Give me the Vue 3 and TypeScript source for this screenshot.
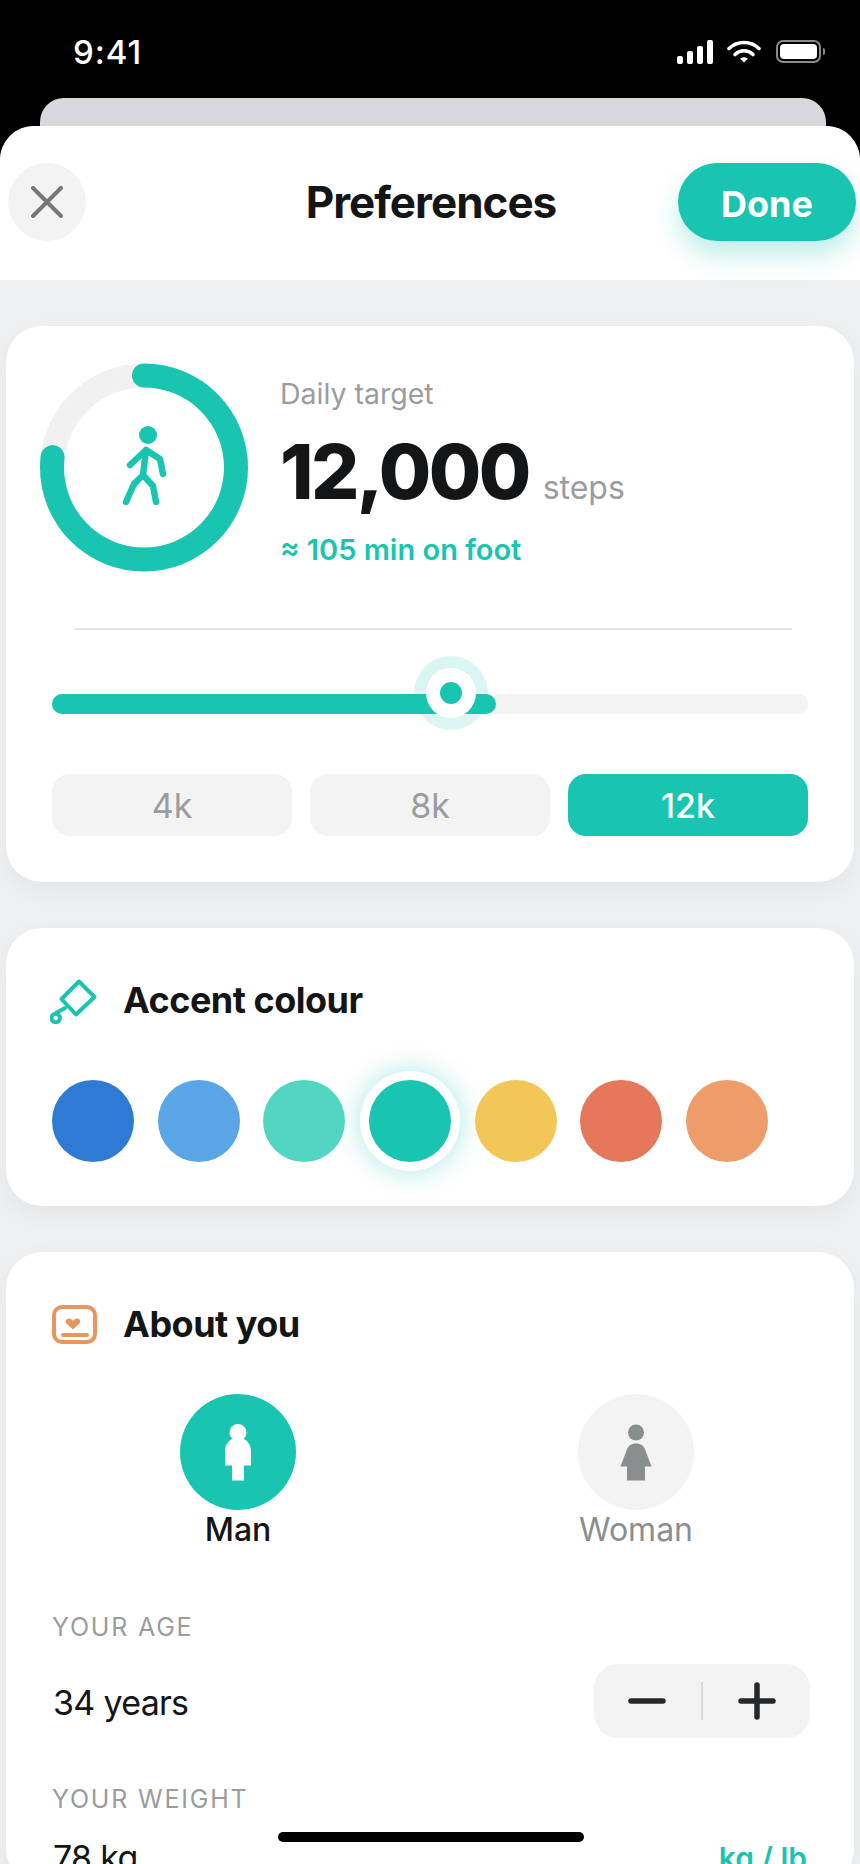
<template>
  <div class="phone">
    <div class="status">
      <span class="time">9:41</span>
      <div class="status-icons">
        <svg width="36" height="24" viewBox="0 0 36 24" fill="#fff">
          <rect x="0" y="16" width="6" height="8" rx="2" />
          <rect x="10" y="11" width="6" height="13" rx="2" />
          <rect x="20" y="6" width="6" height="18" rx="2" />
          <rect x="30" y="0" width="6" height="24" rx="2" />
        </svg>
        <svg width="34" height="24" viewBox="0 0 34 24" fill="none" stroke="#fff" stroke-width="3.6" stroke-linecap="round">
          <path d="M2 8.5C10.5 0.5 23.5 0.5 32 8.5" />
          <path d="M8 14.5C13.5 9.5 20.5 9.5 26 14.5" />
          <path d="M13.2 18.8 17 22.6 20.8 18.8C18.5 16.8 15.5 16.8 13.2 18.8Z" fill="#fff" stroke="none" />
        </svg>
        <div class="battery"><div class="battery-fill"></div></div>
      </div>
    </div>

    <div class="peek"></div>

    <div class="sheet">
      <header class="sheet-header">
        <button class="close">
          <svg width="32" height="32" viewBox="0 0 32 32" fill="none" stroke="#777" stroke-width="4" stroke-linecap="round">
            <path d="M2 2 30 30M30 2 2 30" />
          </svg>
        </button>
        <h1 class="title">Preferences</h1>
        <button class="done">Done</button>
      </header>

      <main class="content">
        <section class="card">
          <div class="hero">
            <div class="ring">
              <svg width="208" height="209" viewBox="0 0 208 209" fill="none">
                <circle cx="104" cy="104.500" :r="ringRadius" stroke="#f1f1f1" stroke-width="24" />
                <circle
                  cx="104"
                  cy="104.500"
                  :r="ringRadius"
                  stroke="#19c5b0"
                  stroke-width="24"
                  stroke-linecap="round"
                  :stroke-dasharray="ringDash"
                  transform="rotate(-90 104 104.500)"
                />
                <g stroke="#19c5b0" stroke-width="6.4" stroke-linecap="round" stroke-linejoin="round">
                  <circle cx="108" cy="72" r="9" fill="#19c5b0" stroke="none" />
                  <path d="M106 87 90 102M106 87 120 96 123 111M106 87 103 112 94 121 86 139M103 112 113 123 116 139" />
                </g>
              </svg>
            </div>
            <div class="hero-text">
              <div class="hero-label">Daily target</div>
              <div class="hero-value">12,000 <span class="hero-unit">steps</span></div>
              <div class="hero-note">≈ 105 min on foot</div>
            </div>
          </div>

          <div class="rule"></div>

          <div class="slider">
            <div class="track">
              <div class="track-fill"></div>
              <div class="thumb"><span class="thumb-dot"></span></div>
            </div>
          </div>

          <div class="presets">
            <button v-for="p in presets" :key="p" class="preset" :class="{ active: p === selectedPreset }">{{ p }}</button>
          </div>
        </section>

        <section class="card">
          <div class="card-title">
            <svg class="card-icon" width="48" height="48" viewBox="0 0 48 48" fill="none" stroke="#19c5b0" stroke-width="4" stroke-linejoin="round" stroke-linecap="round">
              <path d="M29 5.500 44.500 21 26 38.500 11.500 23Z" />
              <path d="M15 32 6 37" />
              <circle cx="5.700" cy="42" r="4.200" />
            </svg>
            <h2>Accent colour</h2>
          </div>
          <div class="swatches">
            <span
              v-for="c in swatches"
              :key="c"
              class="swatch"
              :class="{ selected: c === selectedSwatch }"
              :style="{ background: c }"
            ></span>
          </div>
        </section>

        <section class="card card-about">
          <div class="card-title">
            <svg class="card-icon" width="48" height="48" viewBox="0 0 48 48" fill="none" stroke="#e8965f" stroke-width="4" stroke-linecap="round">
              <rect x="4" y="7" width="41" height="35" rx="8" />
              <path d="M13 35H37" />
              <path d="M23 29.500 17 24C14.500 21.500 16 18.500 19 18.500 20.800 18.500 22 19.500 23 21 24 19.500 25.200 18.500 27 18.500 30 18.500 31.500 21.500 29 24Z" fill="#e8965f" stroke="none" />
            </svg>
            <h2>About you</h2>
          </div>

          <div class="gender">
            <div class="gender-option active">
              <div class="gender-circle">
                <svg width="30" height="57" viewBox="0 0 30 57" fill="#fff">
                  <circle cx="15" cy="8.500" r="8.500" />
                  <path d="M2 41.500V27C2 19 8 13.500 15 13.500S28 19 28 27V41.500H21V56.500H9V41.500Z" />
                </svg>
              </div>
              <span>Man</span>
            </div>
            <div class="gender-option">
              <div class="gender-circle">
                <svg width="34" height="57" viewBox="0 0 34 57" fill="#8a8e8f">
                  <circle cx="17" cy="8.500" r="8" />
                  <path d="M17 19.500C22 19.500 25 22 26.500 26.500L32.500 42.500H26V56.500H8V42.500H1.500L7.500 26.500C9 22 12 19.500 17 19.500Z" />
                </svg>
              </div>
              <span>Woman</span>
            </div>
          </div>

          <div class="field-label age-label">YOUR AGE</div>
          <div class="field-row">
            <span class="field-value">34 years</span>
            <div class="stepper">
              <svg width="38" height="38" viewBox="0 0 38 38" stroke="#26292b" stroke-width="5.5" stroke-linecap="round"><path d="M3 19H35" /></svg>
              <span class="stepper-sep"></span>
              <svg width="38" height="38" viewBox="0 0 38 38" stroke="#26292b" stroke-width="5.5" stroke-linecap="round"><path d="M3 19H35M19 3V35" /></svg>
            </div>
          </div>

          <div class="field-label weight-label">YOUR WEIGHT</div>
          <div class="field-row weight-row">
            <span class="field-value">78 kg</span>
            <span class="unit-switch">kg / lb</span>
          </div>
        </section>
      </main>
    </div>

    <div class="home-bar"></div>
  </div>
</template>

<script setup lang="ts">
const ringRadius = 92
const ringLength = 2 * Math.PI * ringRadius
const ringProgress = 0.767
const ringDash = `${ringLength * ringProgress} ${ringLength}`

const presets = ['4k', '8k', '12k']
const selectedPreset = '12k'

const swatches = ['#2f7bd4', '#5aa5e6', '#52d6c3', '#19c5b0', '#f2c757', '#e5775a', '#ee9d6a']
const selectedSwatch = '#19c5b0'
</script>

<style>
html,
body {
  margin: 0;
  background: #000;
}
</style>

<style scoped>
.phone {
  position: relative;
  width: 860px;
  height: 1864px;
  overflow: hidden;
  background: #000;
  font-family: Inter, 'Noto Sans', sans-serif;
  color: #141516;
}

.status {
  height: 98px;
  box-sizing: border-box;
  padding: 32px 39px 0 73px;
  display: flex;
  justify-content: space-between;
  align-items: flex-start;
}

.time {
  color: #fff;
  font-size: 33px;
  font-weight: 500;
  line-height: 40px;
  letter-spacing: 1px;
}

.status-icons {
  display: flex;
  align-items: flex-start;
  gap: 14px;
  padding-top: 8px;
}

.battery {
  position: relative;
  width: 45px;
  height: 23px;
  box-sizing: border-box;
  margin-left: 1px;
  border: 2px solid #8a8a8a;
  border-radius: 7px;
  padding: 2px;
}

.battery::after {
  content: '';
  position: absolute;
  right: -6px;
  top: 6px;
  width: 2px;
  height: 7px;
  border-radius: 0 2px 2px 0;
  background: #8a8a8a;
}

.battery-fill {
  height: 100%;
  background: #fff;
  border-radius: 4px;
}

.peek {
  height: 28px;
  margin: 0 34px 0 40px;
  background: #d8d8dc;
  border-radius: 24px 24px 0 0;
}

.sheet {
  background: #eef0f1;
  border-radius: 34px 34px 0 0;
  overflow: hidden;
}

.sheet-header {
  height: 154px;
  box-sizing: border-box;
  padding: 37px 4px 0 8px;
  background: #fff;
  display: grid;
  grid-template-columns: 1fr auto 1fr;
  align-items: start;
}

.close {
  width: 78px;
  height: 78px;
  padding: 0;
  border: none;
  border-radius: 50%;
  background: #f3f3f3;
  display: flex;
  align-items: center;
  justify-content: center;
}

.title {
  margin: 0 2px 0 0;
  font-size: 44px;
  font-weight: 700;
  line-height: 78px;
  letter-spacing: -1px;
}

.done {
  justify-self: end;
  width: 178px;
  height: 78px;
  padding: 4px 0 0;
  border: none;
  border-radius: 39px;
  background: #19c5b0;
  color: #fff;
  font-family: inherit;
  font-size: 36px;
  font-weight: 700;
  box-shadow: 0 14px 26px rgba(25, 197, 176, 0.28);
}

.content {
  padding: 46px 6px 0;
  display: flex;
  flex-direction: column;
  gap: 46px;
}

.card {
  background: #fff;
  border-radius: 36px;
  box-shadow: 0 8px 24px rgba(0, 0, 0, 0.05);
}

.hero {
  display: flex;
  padding: 37px 0 0 34px;
  gap: 32px;
}

.ring {
  width: 208px;
  height: 208px;
  flex: none;
}

.hero-label {
  margin-top: 13px;
  font-size: 28.5px;
  line-height: 36px;
  color: #9a9c9e;
}

.hero-value {
  margin-top: 13px;
  font-size: 76px;
  font-weight: 800;
  line-height: 92px;
  letter-spacing: -2.6px;
  white-space: nowrap;
}

.hero-unit {
  font-size: 32px;
  font-weight: 400;
  letter-spacing: 0;
  color: #9a9c9e;
}

.hero-note {
  margin-top: -2px;
  font-size: 29px;
  font-weight: 600;
  line-height: 36px;
  color: #19c5b0;
}

.rule {
  height: 2px;
  margin: 57px 62px 0 68px;
  background: #e5e5e5;
}

.slider {
  padding: 64px 46px 0;
}

.track {
  position: relative;
  height: 20px;
  border-radius: 10px;
  background: #f3f3f3;
}

.track-fill {
  width: 444px;
  height: 100%;
  border-radius: 10px;
  background: #19c5b0;
}

.thumb {
  position: absolute;
  left: 374px;
  top: -26px;
  width: 50px;
  height: 50px;
  border-radius: 50%;
  background: #fff;
  box-shadow: 0 0 0 12px rgba(25, 197, 176, 0.16);
  display: flex;
  align-items: center;
  justify-content: center;
}

.thumb-dot {
  width: 22px;
  height: 22px;
  border-radius: 50%;
  background: #19c5b0;
}

.presets {
  display: flex;
  gap: 18px;
  padding: 60px 46px 46px;
}

.preset {
  flex: 1;
  height: 62px;
  padding: 0;
  border: none;
  border-radius: 18px;
  background: #f3f3f3;
  color: #9a9c9e;
  font-family: inherit;
  font-size: 34px;
}

.preset.active {
  background: #19c5b0;
  color: #fff;
  font-weight: 500;
}

.card-title {
  display: flex;
  align-items: center;
  padding: 48px 46px 0;
  height: 48px;
}

.card-title h2 {
  margin: 0;
  font-size: 36px;
  font-weight: 700;
  letter-spacing: -0.5px;
}

.card-icon {
  flex: none;
  margin: 0 25px 0 -2px;
}

.swatches {
  display: flex;
  justify-content: space-between;
  padding: 56px 86px 44px 46px;
}

.swatch {
  width: 82px;
  height: 82px;
  border-radius: 50%;
}

.swatch.selected {
  box-shadow: 0 0 0 9px #fff, 0 0 22px 14px rgba(25, 197, 176, 0.25);
}

.card-about {
  padding-bottom: 6px;
}

.gender {
  display: flex;
  gap: 282px;
  padding: 46px 0 0 174px;
}

.gender-option {
  width: 116px;
  display: flex;
  flex-direction: column;
  align-items: center;
  font-size: 32px;
  line-height: 38px;
  color: #8a8e8f;
  white-space: nowrap;
}

.gender-option.active {
  color: #141516;
  font-weight: 500;
}

.gender-circle {
  width: 116px;
  height: 116px;
  margin-bottom: 1px;
  border-radius: 50%;
  background: #f3f3f3;
  display: flex;
  align-items: center;
  justify-content: center;
}

.gender-option.active .gender-circle {
  background: #19c5b0;
}

.field-label {
  padding-left: 46px;
  font-size: 25px;
  line-height: 30px;
  letter-spacing: 1.8px;
  color: #9a9c9e;
}

.age-label {
  margin-top: 63px;
}

.weight-label {
  margin-top: 46px;
}

.field-row {
  display: flex;
  justify-content: space-between;
  align-items: center;
  padding: 0 44px 0 47px;
}

.age-label + .field-row {
  margin-top: 22px;
}

.age-label + .field-row .field-value {
  margin-top: 3px;
}

.weight-row {
  margin-top: 18px;
  padding-right: 47px;
}

.field-value {
  margin-top: 5px;
  font-size: 34px;
  line-height: 42px;
  letter-spacing: -0.7px;
}

.unit-switch {
  margin-top: 5px;
  font-size: 30px;
  font-weight: 600;
  color: #19c5b0;
}

.stepper {
  width: 216px;
  height: 74px;
  box-sizing: border-box;
  padding: 0 34px;
  border-radius: 24px;
  background: #f3f3f3;
  display: flex;
  align-items: center;
  justify-content: space-between;
}

.stepper-sep {
  width: 2px;
  height: 38px;
  background: #d9d9d9;
}

.home-bar {
  position: absolute;
  left: 278px;
  top: 1832px;
  width: 306px;
  height: 10px;
  border-radius: 5px;
  background: #000;
}
</style>
